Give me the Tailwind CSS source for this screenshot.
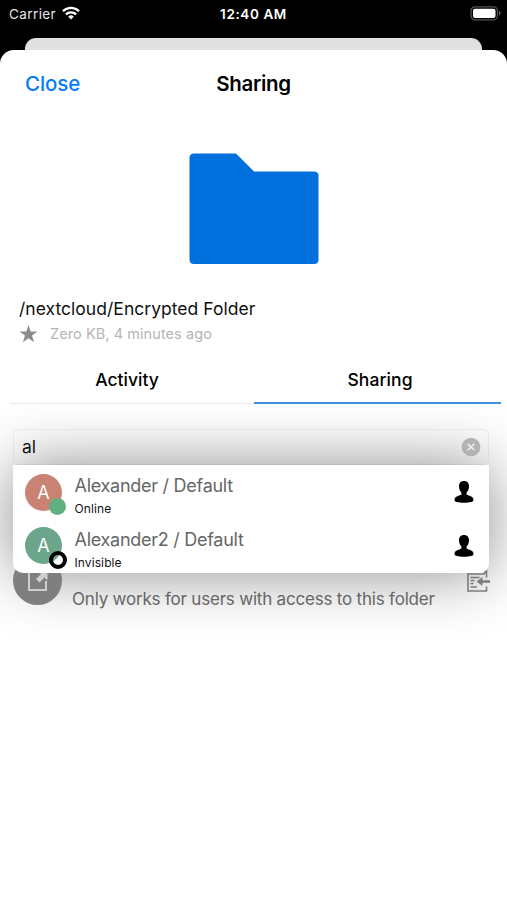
<!DOCTYPE html>
<html lang="en">

<head>
  <meta charset="UTF-8">
  <meta name="viewport" content="width=device-width, initial-scale=1.0">
  <title>Sharing</title>
  <script src="https://cdn.jsdelivr.net/npm/@tailwindcss/browser@4"></script>
</head>

<body class="bg-black h-[900px] flex flex-col overflow-hidden font-[Inter,sans-serif] whitespace-nowrap">
  <!-- Status bar -->
  <header class="h-[38px] shrink-0 grid grid-cols-3 items-start pt-1 text-white text-[13.5px] leading-5">
    <div class="flex items-center pl-[9px] gap-[6px]">
      <span class="tracking-[0.4px] text-neutral-200">Carrier</span>
      <svg class="w-[18px] h-[14px] -mt-[2px]" viewBox="0 0 18 14" fill="none" stroke="white" stroke-width="2.3">
        <path d="M1 5.2a11.4 11.4 0 0 1 16 0"/>
        <path d="M3.9 8.4a7.2 7.2 0 0 1 10.2 0"/>
        <path d="M9 13.6 6.2 10.7a4 4 0 0 1 5.6 0Z" fill="white" stroke="none"/>
      </svg>
    </div>
    <div class="text-center font-semibold tracking-[0.6px]">12:40 AM</div>
    <div class="flex justify-end pr-[6px] pt-[2px]">
      <svg class="w-[31px] h-[15px]" viewBox="0 0 31 15">
        <rect x="1" y="0.8" width="26.5" height="13" rx="4" fill="none" stroke="#555" stroke-width="1.3"/>
        <rect x="3" y="2.7" width="22.5" height="9.2" rx="2" fill="white"/>
        <path d="M29 5v4.6q1.6-.8 1.6-2.3T29 5Z" fill="#666"/>
      </svg>
    </div>
  </header>

  <!-- Edge of the sheet behind -->
  <div class="h-3 shrink-0 mx-[25px] bg-[#e0e0e0] rounded-t-[11px]"></div>

  <!-- Sheet -->
  <main class="flex-1 bg-white rounded-t-[14px] flex flex-col">
    <div class="h-[69px] grid grid-cols-3 items-center px-[25px] text-[20.5px]">
      <button class="text-left text-[#087cf7] font-medium tracking-[-0.1px]">Close</button>
      <h1 class="text-center text-black font-semibold tracking-[-0.3px]">Sharing</h1>
    </div>

    <!-- Folder -->
    <div class="pt-[34px] pl-[189px]">
      <svg class="w-[130px] h-[112px]" viewBox="0 0 130 112">
        <path d="M5 .5H47L65 18.5H125q4.5 0 4.5 4.5V106.5q0 4.5-4.5 4.5H5q-4.5 0-4.5-4.5V5Q.5.5 5 .5Z" fill="#0070dd"/>
      </svg>
    </div>

    <!-- File info -->
    <div class="pt-[32px] pl-[19px]">
      <h2 class="text-[17.5px] leading-6 text-[#111] tracking-[0.03px]">/nextcloud/Encrypted Folder</h2>
      <div class="flex items-center h-[26px] gap-3">
        <svg class="w-[19px] h-[18px]" viewBox="0 0 24 24" fill="#8c8c8c">
          <path d="M12 0l2.9 8.6H24l-7.3 5.5 2.7 8.9L12 17.6 4.6 23l2.7-8.9L0 8.6h9.1Z"/>
        </svg>
        <span class="text-[14.5px] text-[#b5b5b5] tracking-[0.07px]">Zero KB, 4 minutes ago</span>
      </div>
    </div>

    <!-- Tabs -->
    <nav class="relative z-10 bg-white h-[57px] pl-[10px] pr-[6px] grid grid-cols-[244px_247px] text-[17.5px] font-medium text-black">
      <button class="border-b border-[#e8e8e8] pt-[11px] pr-[10px]">Activity</button>
      <button class="border-b-2 border-[#3f8fdd] pt-[12px] pl-[5px] tracking-[0.1px]">Sharing</button>
    </nav>

    <!-- Share search -->
    <section class="relative pt-[25px] pl-[13px] pr-[18px]">
      <!-- Shadow of the suggestions, kept under the icons -->
      <div class="absolute left-[13px] top-[61px] w-[476px] h-[108px] rounded-[10px] shadow-[0_0_62px_rgba(0,0,0,0.46)]"></div>

      <div class="relative h-9 rounded-[5px] border border-black/5 flex items-center justify-between pl-2 pr-[7px]">
        <span class="text-[17.5px] text-[#111]">al</span>
        <svg class="w-5 h-5" viewBox="0 0 20 20">
          <circle cx="10" cy="10" r="9.3" fill="#b3b3b3"/>
          <path d="M6.7 6.7l6.6 6.6M13.3 6.7l-6.6 6.6" stroke="#eee" stroke-width="1.6"/>
        </svg>
      </div>

      <!-- Internal link -->
      <div class="relative flex items-start pt-[91px]">
        <div class="w-[49px] h-[49px] rounded-full bg-[#7f7f7f] flex items-center justify-center">
          <svg class="w-6 h-6 -mt-[1px]" viewBox="0 0 24 24" fill="none" stroke="#cfcfcf" stroke-width="2">
            <path d="M12 4H3v18h17V13"/>
            <path d="M13.5 14.5l5-5 3 3V3h-9.5l3 3-5 5Z" fill="#cfcfcf" stroke="none"/>
          </svg>
        </div>
        <p class="pt-[31px] pl-[10px] text-[17px] leading-6 text-[#666] tracking-[-0.2px]">Only works for users with access to this folder</p>
      </div>

      <!-- Copy link icon -->
      <svg class="absolute left-[466px] top-[163px] w-[25px] h-[26px]" viewBox="0 0 25 26" fill="none" stroke="#7c7c7c" stroke-width="1.6">
        <path d="M2 6V24H20.500V19.500M20.500 10.500V3M1 7h17l2-3"/>
        <path d="M4.500 10.500h9M4.500 13.500h4M4.500 16.500h3M4.500 20h6.500" stroke-width="1.4"/>
        <path d="M24 14.500h-9" stroke-width="2.500"/>
        <path d="M16.500 10v9L10.500 14.500Z" fill="#7c7c7c" stroke="none"/>
      </svg>

      <!-- Suggestions -->
      <ul class="absolute left-[13px] top-[61px] w-[476px] h-[108px] bg-white rounded-b-[10px]">
        <li class="h-[54px] flex pl-[12px] pr-[15px]">
          <div class="relative mt-[9px] w-[37px] h-[37px] rounded-full bg-[#ca8273] text-white text-[18px] flex items-center justify-center">A
            <span class="absolute left-[24px] top-[24px] w-[17px] h-[17px] rounded-full bg-[#62af82]"></span>
          </div>
          <div class="flex-1 pl-[12.5px] pt-[9px]">
            <div class="text-[18px] leading-6 text-[#666] tracking-[-0.27px]">Alexander / Default</div>
            <div class="text-[12px] leading-[22px] text-[#111] tracking-[0.1px]">Online</div>
          </div>
          <svg class="mt-[16px] w-5 h-[22px]" viewBox="0 0 20 22">
            <path d="M10 0C6.7 0 4.9 2.2 5 5.5c.1 2.5 1 4.7 2.4 6v2.2C4.5 14.6.5 15.5.5 19c0 1.9 3.5 2.7 9.5 2.7s9.5-.8 9.5-2.7c0-3.5-4-4.4-6.9-5.3v-2.2c1.4-1.3 2.3-3.5 2.4-6C15.1 2.2 13.3 0 10 0Z"/>
          </svg>
        </li>
        <li class="h-[54px] flex pl-[12px] pr-[15px]">
          <div class="relative mt-[8px] w-[37px] h-[37px] rounded-full bg-[#6ba58b] text-white text-[18px] flex items-center justify-center">A
            <span class="absolute left-[23.5px] top-[23.5px] w-[18px] h-[18px] rounded-full border-4 border-black"></span>
          </div>
          <div class="flex-1 pl-[12.5px] pt-[9px]">
            <div class="text-[18px] leading-6 text-[#666] tracking-[-0.27px]">Alexander2 / Default</div>
            <div class="text-[12px] leading-[22px] text-[#111] tracking-[0.1px]">Invisible</div>
          </div>
          <svg class="mt-[16px] w-5 h-[22px]" viewBox="0 0 20 22">
            <path d="M10 0C6.7 0 4.9 2.2 5 5.5c.1 2.5 1 4.7 2.4 6v2.2C4.5 14.6.5 15.5.5 19c0 1.9 3.5 2.7 9.5 2.7s9.5-.8 9.5-2.7c0-3.5-4-4.4-6.9-5.3v-2.2c1.4-1.3 2.3-3.5 2.4-6C15.1 2.2 13.3 0 10 0Z"/>
          </svg>
        </li>
      </ul>
    </section>
  </main>
</body>

</html>
